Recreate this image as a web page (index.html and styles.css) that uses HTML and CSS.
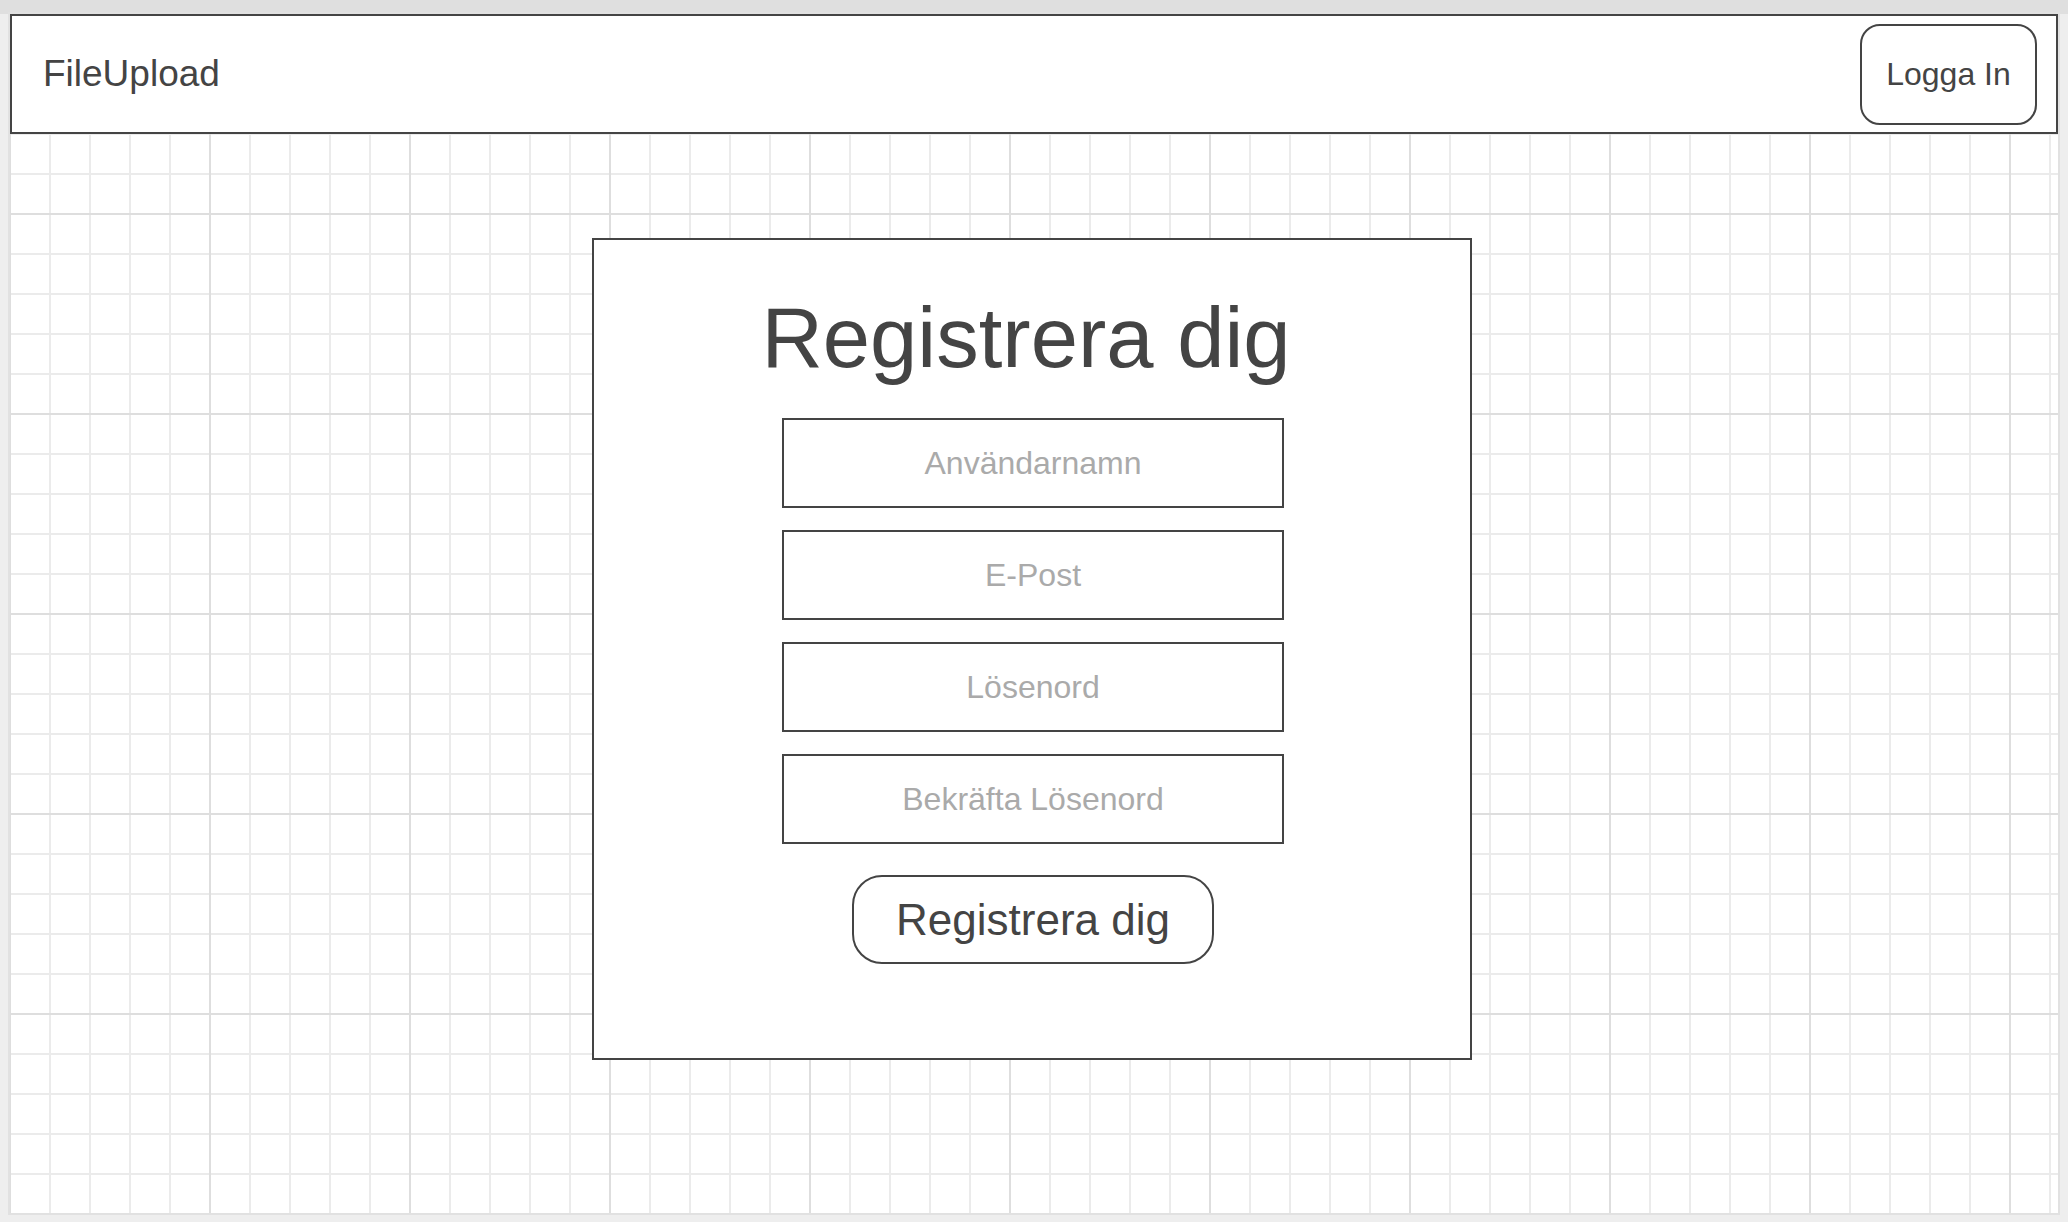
FILE: index.html
```html
<!DOCTYPE html>
<html lang="sv">
<head>
<meta charset="utf-8">
<title>FileUpload – Registrera dig</title>
<link rel="stylesheet" href="styles.css">
</head>
<body>
<div class="topbar"></div>
<div class="canvas">
  <header class="header">
    <div class="brand">FileUpload</div>
    <button class="login-btn" type="button">Logga In</button>
  </header>
  <main class="card">
    <h1 class="title">Registrera dig</h1>
    <form class="form">
      <input class="field" type="text" placeholder="Användarnamn">
      <input class="field" type="email" placeholder="E-Post">
      <input class="field" type="password" placeholder="Lösenord">
      <input class="field" type="password" placeholder="Bekräfta Lösenord">
      <button class="submit-btn" type="button">Registrera dig</button>
    </form>
  </main>
</div>
</body>
</html>
```
FILE: styles.css
```css
* { box-sizing: border-box; }

html, body {
  margin: 0;
  padding: 0;
}

body {
  background: #eeeeee;
  font-family: "Liberation Sans", Arial, sans-serif;
  color: #444444;
  width: 2068px;
  height: 1222px;
  overflow: hidden;
}

.topbar {
  height: 14px;
  background: #dfdfdf;
}

.canvas {
  margin-left: 10px;
  width: 2048px;
  height: 1199px;
  background-color: #ffffff;
  background-image:
    linear-gradient(to right, #dedede 2px, transparent 2px),
    linear-gradient(to bottom, #dedede 2px, transparent 2px),
    linear-gradient(to right, #ebebeb 2px, transparent 2px),
    linear-gradient(to bottom, #ebebeb 2px, transparent 2px);
  background-size: 200px 200px, 200px 200px, 40px 40px, 40px 40px;
  background-position: -1px -1px;
  box-shadow: 0 0 0 2px #e1e1e1;
  overflow: hidden;
}

.header {
  height: 120px;
  border: 2px solid #444444;
  background: #ffffff;
  display: flex;
  align-items: center;
  justify-content: space-between;
  padding: 0 19px 0 31px;
}

.brand {
  font-size: 37px;
  color: #444444;
}

.login-btn {
  width: 177px;
  height: 101px;
  border: 2px solid #444444;
  border-radius: 20px;
  background: #ffffff;
  font-family: "Liberation Sans", Arial, sans-serif;
  font-size: 32px;
  color: #444444;
  padding: 0;
}

.card {
  margin: 104px 0 0 582px;
  width: 880px;
  height: 822px;
  border: 2px solid #444444;
  background: #ffffff;
  padding-top: 56px;
  display: flex;
  flex-direction: column;
  align-items: center;
}

.title {
  margin: 0 0 38px;
  font-size: 85px;
  line-height: 84px;
  font-weight: normal;
  color: #444444;
  padding-right: 12px;
}

.form {
  display: flex;
  flex-direction: column;
  align-items: center;
  gap: 22px;
  padding-left: 2px;
}

.field {
  width: 502px;
  height: 90px;
  border: 2px solid #444444;
  border-radius: 0;
  background: #ffffff;
  font-family: "Liberation Sans", Arial, sans-serif;
  font-size: 32px;
  text-align: center;
  color: #444444;
  padding: 0;
  outline: none;
}

.field::placeholder {
  color: #aaaaaa;
  opacity: 1;
}

.submit-btn {
  margin-top: 9px;
  width: 362px;
  height: 89px;
  border: 2px solid #444444;
  border-radius: 30px;
  background: #ffffff;
  font-family: "Liberation Sans", Arial, sans-serif;
  font-size: 44px;
  color: #444444;
  padding: 0;
}
```
